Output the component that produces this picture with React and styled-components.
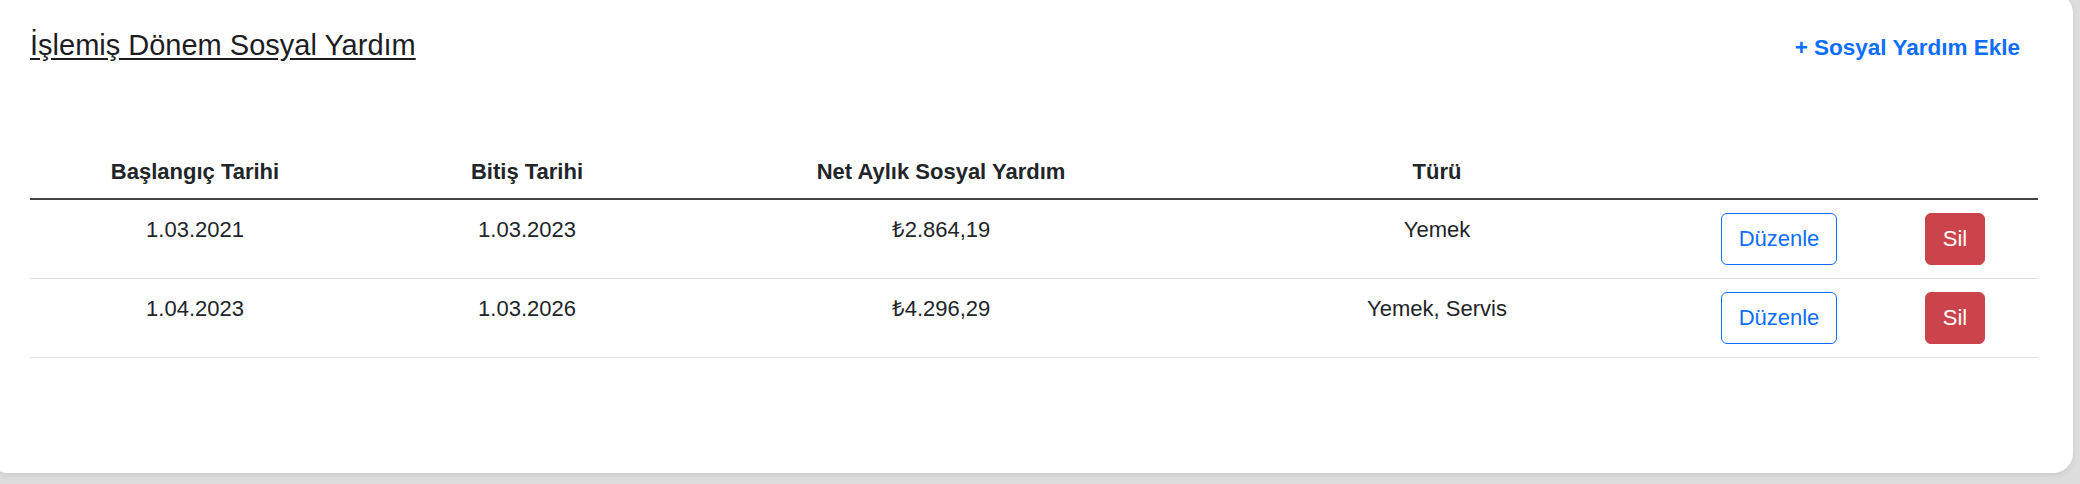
import React from "react";
import styled, { createGlobalStyle } from "styled-components";

const GlobalStyle = createGlobalStyle`
    html, body {
        margin: 0;
        padding: 0;
        background: #dddddd;
        height: 484px;
        overflow: hidden;
        font-family: "Liberation Sans", Arial, Helvetica, sans-serif;
        color: #212529;
    }
`;

const rows = [
    { start: "1.03.2021", end: "1.03.2023", amount: "₺2.864,19", type: "Yemek" },
    { start: "1.04.2023", end: "1.03.2026", amount: "₺4.296,29", type: "Yemek, Servis" },
];

const columns = [330, 334, 494, 498, 186, 166];

export default function App() {
    return (
        <>
            <GlobalStyle />
            <Card>
                <Header>
                    <Title>İşlemiş Dönem Sosyal Yardım</Title>
                    <AddLink href="#">+ Sosyal Yardım Ekle</AddLink>
                </Header>
                <Table>
                    <colgroup>
                        {columns.map((w, i) => (
                            <col key={i} style={{ width: w }} />
                        ))}
                    </colgroup>
                    <thead>
                        <tr>
                            <th>Başlangıç Tarihi</th>
                            <th>Bitiş Tarihi</th>
                            <th>Net Aylık Sosyal Yardım</th>
                            <th>Türü</th>
                            <th></th>
                            <th></th>
                        </tr>
                    </thead>
                    <tbody>
                        {rows.map((row) => (
                            <tr key={row.start}>
                                <td>{row.start}</td>
                                <td>{row.end}</td>
                                <td>{row.amount}</td>
                                <td>{row.type}</td>
                                <td>
                                    <Button variant="outline">Düzenle</Button>
                                </td>
                                <td>
                                    <Button variant="danger">Sil</Button>
                                </td>
                            </tr>
                        ))}
                    </tbody>
                </Table>
            </Card>
        </>
    );
}

const Card = styled.div`
    box-sizing: border-box;
    width: 2085px;
    margin: -7px 0 0 -12px;
    padding: 35px 35px 115px 42px;
    background: #ffffff;
    border-radius: 20px;
    box-shadow: 0 2px 6px rgba(0, 0, 0, 0.08);
`;

const Header = styled.div`
    display: flex;
    justify-content: space-between;
    align-items: baseline;
    padding-right: 18px;
    margin-bottom: 74px;
`;

const Title = styled.h2`
    margin: 0;
    font-size: 29px;
    line-height: 35px;
    font-weight: 400;
    text-decoration: underline;
    text-underline-offset: 3px;
    color: #1d1d1f;
`;

const AddLink = styled.a`
    font-size: 22.5px;
    line-height: 35px;
    font-weight: 700;
    color: #0d6efd;
    text-decoration: none;
`;

const Table = styled.table`
    width: 2008px;
    border-collapse: collapse;
    table-layout: fixed;
    font-size: 22px;

    th {
        padding: 16px 10px 10px;
        line-height: 33px;
        font-weight: 700;
        text-align: center;
        border-bottom: 2px solid #444444;
    }

    td {
        padding: 13px 10px;
        line-height: 34px;
        text-align: center;
        vertical-align: top;
        border-bottom: 1px solid #dee2e6;
    }
`;

const Button = styled.button`
    font-family: inherit;
    font-size: 22px;
    line-height: 34px;
    padding: 8px 17px;
    border-radius: 6px;
    cursor: pointer;
    border: 1px solid ${(p) => (p.variant === "danger" ? "#cc444b" : "#0d6efd")};
    background: ${(p) => (p.variant === "danger" ? "#cc444b" : "#ffffff")};
    color: ${(p) => (p.variant === "danger" ? "#ffffff" : "#0d6efd")};
`;
